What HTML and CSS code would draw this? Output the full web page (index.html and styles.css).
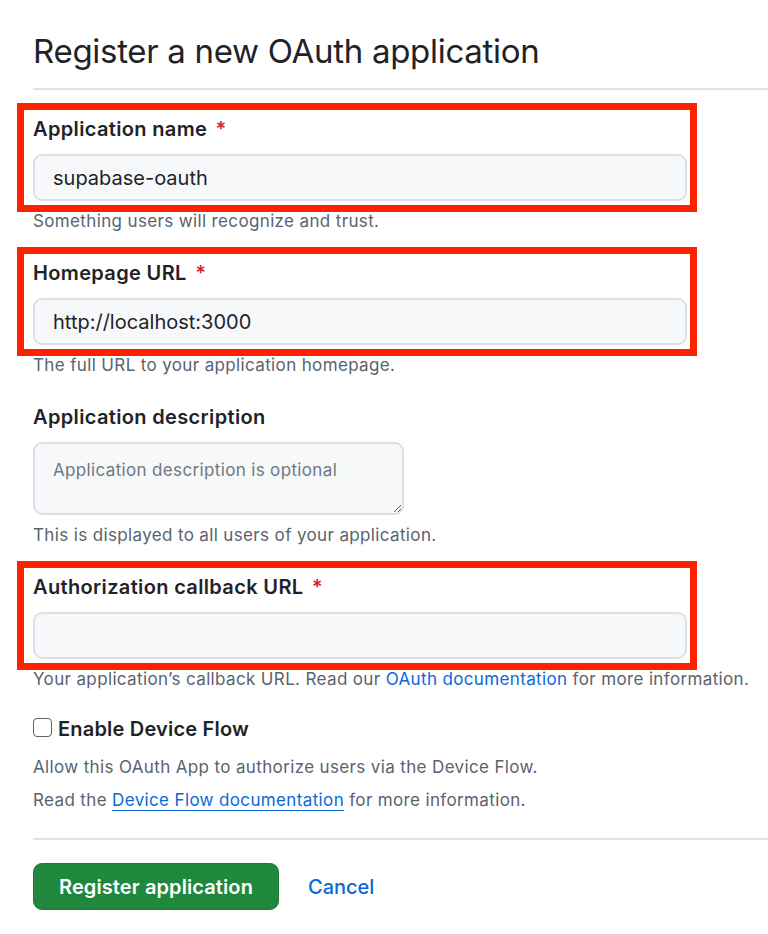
FILE: index.html
```html
<!DOCTYPE html>
<html lang="en">
<head>
<meta charset="utf-8">
<title>Register a new OAuth application</title>
<link rel="stylesheet" href="styles.css">
</head>
<body>
<div class="page">
  <div class="subhead">
    <h1 class="subhead-title">Register a new OAuth application</h1>
  </div>
  <form class="app-form">
    <div class="form-group">
      <div class="field">
        <label class="label" for="name">Application name <span class="req">*</span></label>
        <input class="input" id="name" type="text" value="supabase-oauth">
        <span class="highlight"></span>
      </div>
      <p class="note">Something users will recognize and trust.</p>
    </div>

    <div class="form-group">
      <div class="field">
        <label class="label" for="url">Homepage URL <span class="req">*</span></label>
        <input class="input" id="url" type="text" value="http://localhost:3000">
        <span class="highlight"></span>
      </div>
      <p class="note">The full URL to your application homepage.</p>
    </div>

    <div class="form-group">
      <div class="field">
        <label class="label" for="desc">Application description</label>
        <textarea class="textarea" id="desc" placeholder="Application description is optional"></textarea>
      </div>
      <p class="note">This is displayed to all users of your application.</p>
    </div>

    <div class="form-group form-group-last">
      <div class="field">
        <label class="label" for="cb">Authorization callback URL <span class="req">*</span></label>
        <input class="input" id="cb" type="text" value="">
        <span class="highlight"></span>
      </div>
      <p class="note">Your application’s callback URL. Read our <a class="link" href="#">OAuth documentation</a> for more information.</p>
    </div>

    <div class="form-check">
      <label class="check-label"><input class="checkbox" type="checkbox"> Enable Device Flow</label>
      <p class="note note-first">Allow this OAuth App to authorize users via the Device Flow.</p>
      <p class="note note-second">Read the <a class="link link-underline" href="#">Device Flow documentation</a> for more information.</p>
    </div>

    <div class="form-actions">
      <button class="btn-primary" type="button">Register application</button>
      <a class="btn-link" href="#">Cancel</a>
    </div>
  </form>
</div>
</body>
</html>
```

FILE: styles.css
```css
html, body {
  margin: 0;
  padding: 0;
  background: #ffffff;
}

body {
  font-family: Inter, "Noto Sans", "Liberation Sans", sans-serif;
  color: #1f2328;
}

.page {
  padding-left: 33px;
}

.subhead {
  padding-top: 29px;
  padding-bottom: 15px;
  border-bottom: 2px solid #dfe3e8;
}

.subhead-title {
  margin: 0;
  font-size: 33px;
  line-height: 44px;
  font-weight: 400;
  letter-spacing: -0.3px;
}

.app-form {
  padding-top: 25px;
}

.form-group {
  margin-bottom: 26px;
}

.form-group-last {
  margin-bottom: 24px;
}

.field {
  position: relative;
  width: 654px;
}

.label {
  display: block;
  font-size: 20px;
  line-height: 28px;
  font-weight: 600;
  letter-spacing: 0.35px;
  margin-bottom: 11px;
}

.req {
  color: #d1242f;
  margin-left: 3px;
}

.input {
  display: block;
  box-sizing: border-box;
  width: 654px;
  height: 47px;
  padding: 0 18px;
  font-family: inherit;
  font-size: 20px;
  color: #1f2328;
  background: #f6f8fa;
  border: 2px solid #dae0e7;
  border-radius: 9px;
  outline: none;
}

.textarea {
  display: block;
  box-sizing: border-box;
  width: 371px;
  height: 73px;
  padding: 14px 18px;
  font-family: inherit;
  font-size: 17px;
  line-height: 24px;
  letter-spacing: 0.35px;
  color: #1f2328;
  background: #f6f8fa;
  border: 2px solid #dae0e7;
  border-radius: 9px;
  outline: none;
  resize: vertical;
}

.textarea::placeholder {
  color: #6e7781;
}

.highlight {
  position: absolute;
  top: -12px;
  bottom: -11px;
  left: -16px;
  width: 680px;
  box-sizing: border-box;
  border: 7px solid #fc2200;
  pointer-events: none;
}

.note {
  margin: 8px 0 0;
  font-size: 17px;
  line-height: 24px;
  letter-spacing: 0.36px;
  color: #59636e;
  white-space: nowrap;
}

.link {
  color: #0969da;
  text-decoration: none;
}

.link-underline {
  text-decoration: underline;
  text-underline-offset: 4px;
  text-decoration-thickness: 1px;
}

.form-check {
  padding-bottom: 26px;
  border-bottom: 2px solid #dfe3e8;
}

.check-label {
  display: flex;
  align-items: center;
  gap: 6px;
  font-size: 20px;
  line-height: 28px;
  font-weight: 600;
  letter-spacing: 0.2px;
}

.checkbox {
  appearance: none;
  -webkit-appearance: none;
  margin: 0;
  width: 19px;
  height: 19px;
  box-sizing: border-box;
  border: 1.5px solid #59636e;
  border-radius: 4px;
  background: #ffffff;
  position: relative;
  top: -2px;
}

.note-first {
  margin-top: 12px;
}

.note-second {
  margin-top: 9px;
}

.form-actions {
  display: flex;
  align-items: center;
  gap: 29px;
  padding-top: 23px;
}

.btn-primary {
  box-sizing: border-box;
  height: 47px;
  padding: 0 25px;
  font-family: inherit;
  font-size: 20px;
  font-weight: 600;
  letter-spacing: 0.1px;
  color: #ffffff;
  background: #1f883d;
  border: 1px solid #1c7a37;
  border-radius: 9px;
}

.btn-link {
  font-size: 20px;
  font-weight: 500;
  color: #0969da;
  text-decoration: none;
}
```
